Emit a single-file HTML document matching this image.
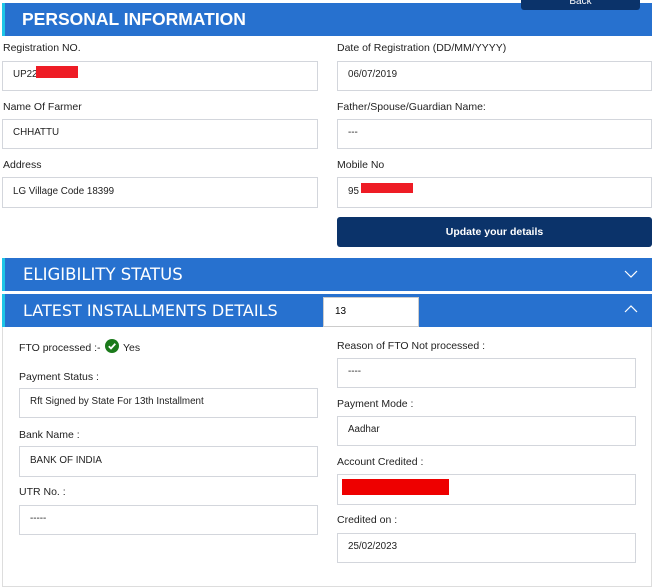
<!DOCTYPE html>
<html><head><style>
body{margin:0;width:654px;height:571px;background:#fff;position:relative;overflow:hidden;font-family:"Liberation Sans","DejaVu Sans",sans-serif;}
div{position:absolute;box-sizing:border-box;}
.bar{background:#2771cf;border-left:3px solid #1ec6e6;color:#fff;}
.l{font-size:10.5px;color:#222;white-space:nowrap;}
.i{border:1px solid #d3d6dc;background:#fff;font-size:9.8px;color:#222;padding-left:10px;padding-bottom:3px;display:flex;align-items:center;}
.red{background:#ee1c25;}
</style></head><body>
<div class="bar" style="left:2px;top:3px;width:650px;height:33px;"></div>
<div style="left:22px;top:9px;font-size:17.5px;font-weight:bold;color:#fff;font-family:'Liberation Sans',sans-serif;">PERSONAL INFORMATION</div>
<div style="left:521px;top:-6px;width:119px;height:16px;background:#0b336a;border-radius:3px;color:#fff;font-size:10px;text-align:center;line-height:16px;">Back</div>

<div class="l" style="left:3px;top:42px;">Registration NO.</div>
<div class="l" style="left:337px;top:42px;">Date of Registration (DD/MM/YYYY)</div>
<div class="i" style="left:2px;top:61px;width:316px;height:30px;">UP22</div>
<div class="red" style="left:36px;top:66px;width:42px;height:12px;"></div>
<div class="i" style="left:337px;top:61px;width:315px;height:30px;">06/07/2019</div>

<div class="l" style="left:3px;top:101px;">Name Of Farmer</div>
<div class="l" style="left:337px;top:101px;">Father/Spouse/Guardian Name:</div>
<div class="i" style="left:2px;top:119px;width:316px;height:30px;">CHHATTU</div>
<div class="i" style="left:337px;top:119px;width:315px;height:30px;">---</div>

<div class="l" style="left:3px;top:159px;">Address</div>
<div class="l" style="left:337px;top:159px;">Mobile No</div>
<div class="i" style="left:2px;top:177px;width:316px;height:31px;">LG Village Code 18399</div>
<div class="i" style="left:337px;top:177px;width:315px;height:31px;">95</div>
<div class="red" style="left:361px;top:183px;width:52px;height:10px;"></div>
<div style="left:337px;top:217px;width:315px;height:30px;background:#0b336a;border-radius:3px;color:#fff;font-size:10.5px;font-weight:bold;text-align:center;line-height:30px;">Update your details</div>

<div class="bar" style="left:2px;top:258px;width:650px;height:33px;"></div>
<div style="left:23px;top:265px;font-size:16.5px;color:#fff;font-family:'DejaVu Sans',sans-serif;">ELIGIBILITY STATUS</div>
<svg style="position:absolute;left:624px;top:269px" width="14" height="10"><path d="M1 2 L7 8 L13 2" stroke="#fff" fill="none" stroke-width="1.2"/></svg>

<div class="bar" style="left:2px;top:294px;width:650px;height:33px;"></div>
<div style="left:23px;top:301px;font-size:16px;color:#fff;font-family:'DejaVu Sans',sans-serif;">LATEST INSTALLMENTS DETAILS</div>
<div style="left:323px;top:297px;width:96px;height:30px;background:#fff;border:1px solid #ccc;font-size:10px;padding-left:11px;line-height:28px;">13</div>
<svg style="position:absolute;left:624px;top:304px" width="14" height="10"><path d="M1 8 L7 2 L13 8" stroke="#fff" fill="none" stroke-width="1.2"/></svg>

<div style="left:2px;top:327px;width:650px;height:260px;border:1px solid #ddd;border-top:none;"></div>

<div class="l" style="left:19px;top:342px;">FTO processed :-</div>
<svg style="position:absolute;left:105px;top:339px" width="14" height="14"><circle cx="7" cy="7" r="7" fill="#1b7a1b"/><path d="M3.8 7.2 L6 9.4 L10.3 4.8" stroke="#fff" stroke-width="1.8" fill="none"/></svg>
<div class="l" style="left:123px;top:342px;">Yes</div>
<div class="l" style="left:19px;top:371px;">Payment Status :</div>
<div class="i" style="left:19px;top:388px;width:299px;height:30px;">Rft Signed by State For 13th Installment</div>
<div class="l" style="left:19px;top:429px;">Bank Name :</div>
<div class="i" style="left:19px;top:446px;width:299px;height:31px;">BANK OF INDIA</div>
<div class="l" style="left:19px;top:486px;">UTR No. :</div>
<div class="i" style="left:19px;top:505px;width:299px;height:30px;">-----</div>

<div class="l" style="left:337px;top:340px;">Reason of FTO Not processed :</div>
<div class="i" style="left:337px;top:358px;width:299px;height:30px;">----</div>
<div class="l" style="left:337px;top:398px;">Payment Mode :</div>
<div class="i" style="left:337px;top:416px;width:299px;height:30px;">Aadhar</div>
<div class="l" style="left:337px;top:456px;">Account Credited :</div>
<div class="i" style="left:337px;top:474px;width:299px;height:31px;"></div>
<div style="left:342px;top:479px;width:107px;height:16px;background:#ee0000;"></div>
<div class="l" style="left:337px;top:514px;">Credited on :</div>
<div class="i" style="left:337px;top:533px;width:299px;height:30px;">25/02/2023</div>
</body></html>
